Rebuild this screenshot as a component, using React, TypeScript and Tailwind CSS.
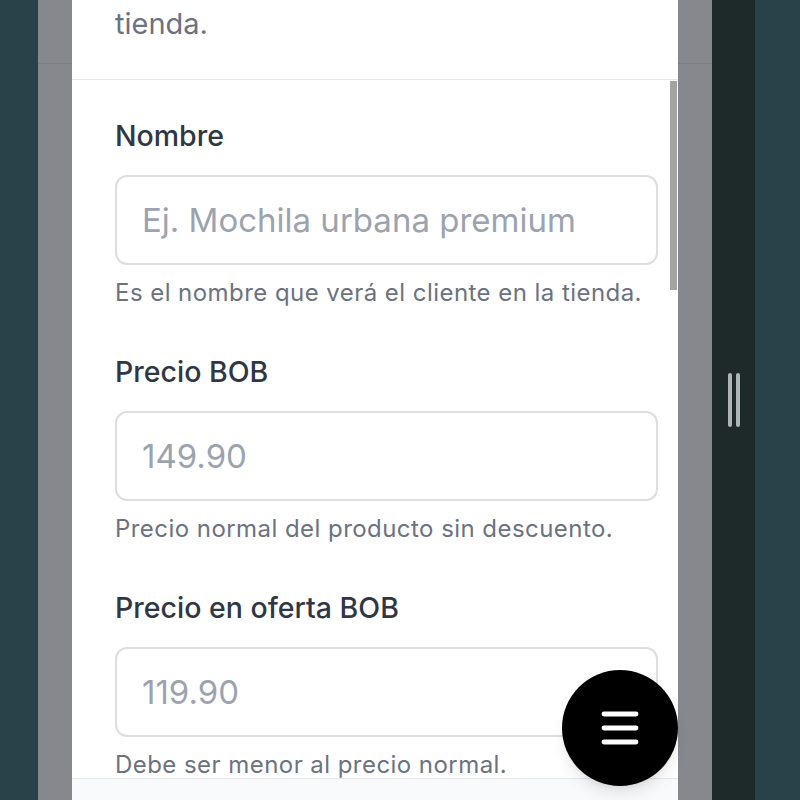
import { Menu } from "lucide-react"

const fields = [
  { label: "Nombre", placeholder: "Ej. Mochila urbana premium", help: "Es el nombre que verá el cliente en la tienda." },
  { label: "Precio BOB", placeholder: "149.90", help: "Precio normal del producto sin descuento." },
  { label: "Precio en oferta BOB", placeholder: "119.90", help: "Debe ser menor al precio normal." },
]

export default function App() {
  return (
    <div className="relative w-[800px] h-[800px] flex overflow-hidden bg-[#28424a] font-['Inter',sans-serif]">
      {/* left backdrop */}
      <div className="w-[38px] h-full bg-[#28424a]" />
      <div className="w-[34px] h-full bg-[#86888e]">
        <div className="h-[64px] border-b border-[#7c7e84]" />
      </div>

      {/* modal */}
      <div className="w-[606px] h-full flex flex-col bg-white">
        <div className="h-[80px] shrink-0 border-b border-[#e5e7eb] pl-[43px] overflow-hidden">
          <p className="text-[29px] leading-[36px] mt-[6px] text-[#6b7280]">tienda.</p>
        </div>

        <div className="relative h-[698px] shrink-0 overflow-hidden">
          <div className="pl-[43px] pr-[20px] pt-[40px] flex flex-col gap-[49px]">
            {fields.map((f) => (
              <div key={f.label} className="flex flex-col">
                <label className="text-[28.5px] leading-[32px] font-medium text-[#2f3744]">{f.label}</label>
                <input
                  className="mt-[23px] h-[90px] w-full rounded-[12px] border-2 border-[#dcdee2] px-[25px] text-[33px] text-[#374151] placeholder:text-[#9ca3af] outline-none"
                  placeholder={f.placeholder}
                />
                <p className="mt-[14px] text-[24px] leading-[28px] tracking-[0.45px] text-[#6b7280]">{f.help}</p>
              </div>
            ))}
          </div>
          {/* scrollbar thumb */}
          <div className="absolute right-[1px] top-[1px] w-[7px] h-[209px] bg-[#a3a3a3]" />
        </div>

        <div className="flex-1 border-t border-[#e5e7eb] bg-[#f9fafb]" />
      </div>

      {/* right backdrop */}
      <div className="w-[34px] h-full bg-[#86888e]">
        <div className="h-[64px] border-b border-[#7c7e84]" />
      </div>
      <div className="w-[43px] h-full bg-[#1e2a2a] flex items-center justify-center gap-[4px]">
        <div className="w-[4px] h-[54px] rounded-full bg-[#aeb3b5]" />
        <div className="w-[4px] h-[54px] rounded-full bg-[#aeb3b5]" />
      </div>
      <div className="flex-1 h-full bg-[#28424a]" />

      {/* floating menu button */}
      <button className="absolute left-[562px] top-[670px] w-[116px] h-[116px] rounded-full bg-black flex items-center justify-center shadow-lg">
        <Menu className="w-[48px] h-[48px] text-white" strokeWidth={2.4} />
      </button>
    </div>
  )
}
